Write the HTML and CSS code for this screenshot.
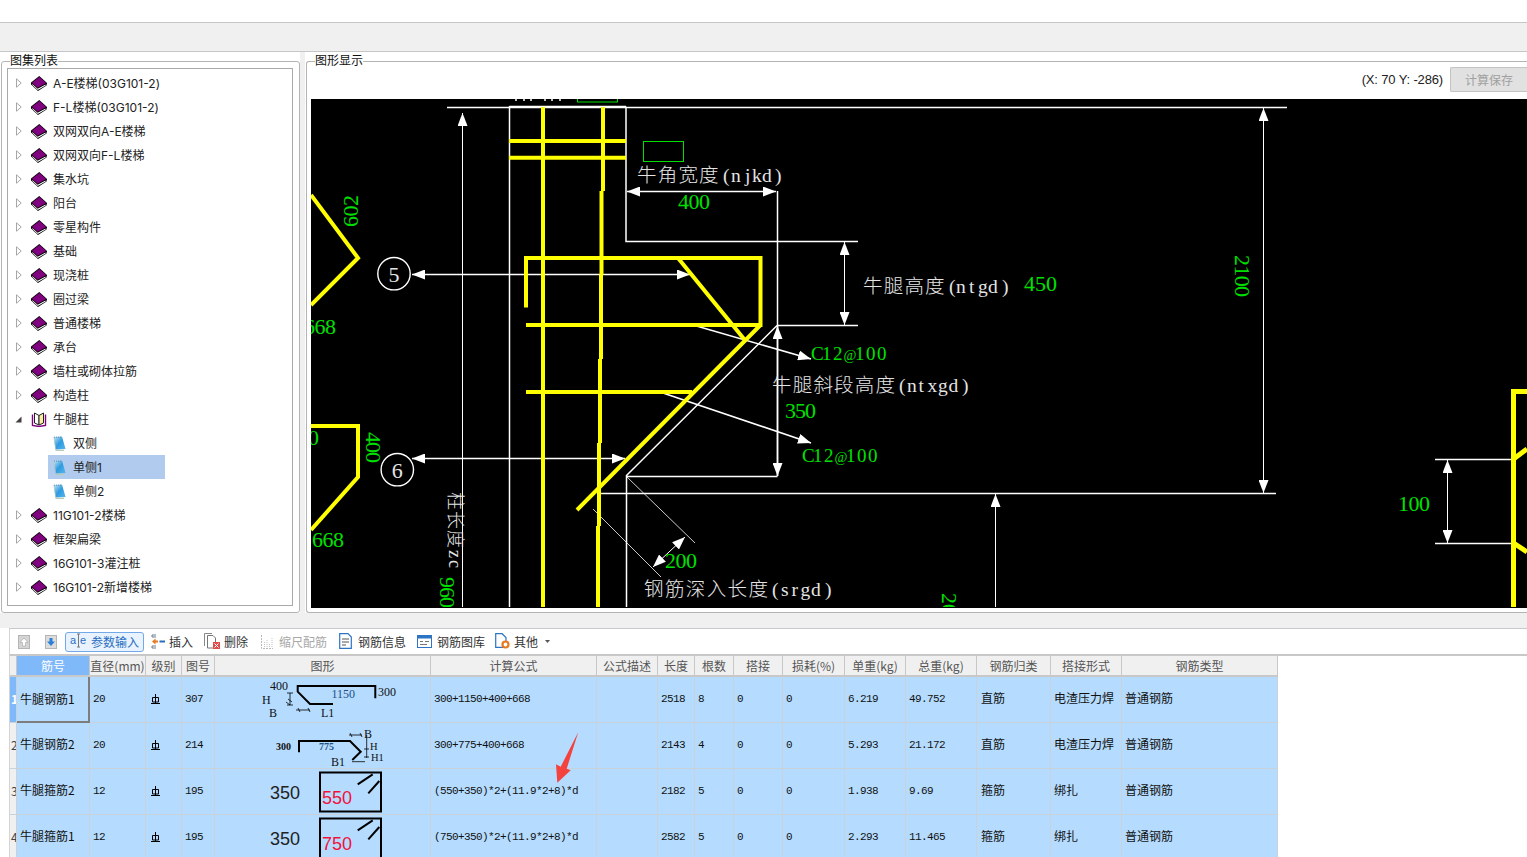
FILE: index.html
```html
<!DOCTYPE html>
<html lang="zh-CN">
<head>
<meta charset="utf-8">
<title>图集列表</title>
<link rel="stylesheet" href="styles.css">
</head>
<body>
<svg class="defs" width="0" height="0" aria-hidden="true">
  <defs>
    <linearGradient id="noteFill" x1="0" y1="0" x2="1" y2="1">
      <stop offset="0" stop-color="#cdeaf6"/><stop offset=".5" stop-color="#2f9be0"/><stop offset="1" stop-color="#57b6ea"/>
    </linearGradient>
    <marker id="ah" viewBox="0 0 13 10" refX="13" refY="5" markerWidth="13" markerHeight="10" markerUnits="userSpaceOnUse" orient="auto-start-reverse">
      <path d="M0 0L13 5L0 10z" fill="#fff"/>
    </marker>
  </defs>
  <symbol id="book" viewBox="0 0 16 15">
    <polygon points="8.3,0 16,7 15.5,9.500 7,15 0,8.500 0,6.500" fill="#000"/>
    <polygon points="8.3,1 15.2,7 6.600,11.800 1,6.800" fill="#800080"/>
    <polygon points="1.300,8 6.600,12.800 14.600,8.600 14.600,9.400 6.800,13.900 1.300,9" fill="#fff"/>
  </symbol>
  <symbol id="openbook" viewBox="0 0 15 15">
    <path d="M1 2.500V13.500L7.500 14.500L14 13.500V2.500" fill="#fff" stroke="#800080" stroke-width="1.400"/>
    <path d="M3 1L7.500 3.500V13L3 11z" fill="#fff" stroke="#222"/>
    <path d="M12 1L7.500 3.500V13L12 11z" fill="#f8efa0" stroke="#222"/>
  </symbol>
  <symbol id="note" viewBox="0 0 13 15">
    <polygon points="0.500,1 9,0.500 12.500,13 2.500,13.500" fill="url(#noteFill)"/>
    <polygon points="0.500,1 2.500,13 2.500,15 11,15 11,13.800 3.200,13.800 1.200,1" fill="#b9c9b8"/>
    <path d="M1 1.200H9" stroke="#5d8fb0" stroke-dasharray="1 1"/>
  </symbol>
  <symbol id="closed" viewBox="0 0 6 10"><path d="M.5 .8L5.200 5L.5 9.200z" fill="#fff" stroke="#a6a6a6"/></symbol>
  <symbol id="open" viewBox="0 0 7 7"><path d="M6.500 .5V6.500H.5z" fill="#404040"/></symbol>
  <symbol id="bar" viewBox="0 0 9 10">
    <path d="M4.500 0V10M0 9.500H9M1.500 3.500H7.500V8H1.500z" fill="none" stroke="#000" stroke-width="1"/>
  </symbol>
</svg>

<div class="app">
  <div class="topbar"></div>
  <div class="menubar"></div>

  <div class="panes">
    <section class="pane pane-left">
      <div class="group">
        <span class="legend">图集列表</span>
        <div class="tree">
          <div class="node"><svg class="twist"><use href="#closed"/></svg><span class="label"><svg class="ico"><use href="#book"/></svg><span class="txt">A-E楼梯(03G101-2)</span></span></div>
          <div class="node"><svg class="twist"><use href="#closed"/></svg><span class="label"><svg class="ico"><use href="#book"/></svg><span class="txt">F-L楼梯(03G101-2)</span></span></div>
          <div class="node"><svg class="twist"><use href="#closed"/></svg><span class="label"><svg class="ico"><use href="#book"/></svg><span class="txt">双网双向A-E楼梯</span></span></div>
          <div class="node"><svg class="twist"><use href="#closed"/></svg><span class="label"><svg class="ico"><use href="#book"/></svg><span class="txt">双网双向F-L楼梯</span></span></div>
          <div class="node"><svg class="twist"><use href="#closed"/></svg><span class="label"><svg class="ico"><use href="#book"/></svg><span class="txt">集水坑</span></span></div>
          <div class="node"><svg class="twist"><use href="#closed"/></svg><span class="label"><svg class="ico"><use href="#book"/></svg><span class="txt">阳台</span></span></div>
          <div class="node"><svg class="twist"><use href="#closed"/></svg><span class="label"><svg class="ico"><use href="#book"/></svg><span class="txt">零星构件</span></span></div>
          <div class="node"><svg class="twist"><use href="#closed"/></svg><span class="label"><svg class="ico"><use href="#book"/></svg><span class="txt">基础</span></span></div>
          <div class="node"><svg class="twist"><use href="#closed"/></svg><span class="label"><svg class="ico"><use href="#book"/></svg><span class="txt">现浇桩</span></span></div>
          <div class="node"><svg class="twist"><use href="#closed"/></svg><span class="label"><svg class="ico"><use href="#book"/></svg><span class="txt">圈过梁</span></span></div>
          <div class="node"><svg class="twist"><use href="#closed"/></svg><span class="label"><svg class="ico"><use href="#book"/></svg><span class="txt">普通楼梯</span></span></div>
          <div class="node"><svg class="twist"><use href="#closed"/></svg><span class="label"><svg class="ico"><use href="#book"/></svg><span class="txt">承台</span></span></div>
          <div class="node"><svg class="twist"><use href="#closed"/></svg><span class="label"><svg class="ico"><use href="#book"/></svg><span class="txt">墙柱或砌体拉筋</span></span></div>
          <div class="node"><svg class="twist"><use href="#closed"/></svg><span class="label"><svg class="ico"><use href="#book"/></svg><span class="txt">构造柱</span></span></div>
          <div class="node"><svg class="twist twist-open"><use href="#open"/></svg><span class="label"><svg class="ico"><use href="#openbook"/></svg><span class="txt">牛腿柱</span></span></div>
          <div class="node child"><span class="label"><svg class="ico-note"><use href="#note"/></svg><span class="txt">双侧</span></span></div>
          <div class="node child"><span class="label selected"><svg class="ico-note"><use href="#note"/></svg><span class="txt">单侧1</span></span></div>
          <div class="node child"><span class="label"><svg class="ico-note"><use href="#note"/></svg><span class="txt">单侧2</span></span></div>
          <div class="node"><svg class="twist"><use href="#closed"/></svg><span class="label"><svg class="ico"><use href="#book"/></svg><span class="txt">11G101-2楼梯</span></span></div>
          <div class="node"><svg class="twist"><use href="#closed"/></svg><span class="label"><svg class="ico"><use href="#book"/></svg><span class="txt">框架扁梁</span></span></div>
          <div class="node"><svg class="twist"><use href="#closed"/></svg><span class="label"><svg class="ico"><use href="#book"/></svg><span class="txt">16G101-3灌注桩</span></span></div>
          <div class="node"><svg class="twist"><use href="#closed"/></svg><span class="label"><svg class="ico"><use href="#book"/></svg><span class="txt">16G101-2新增楼梯</span></span></div>
        </div>
      </div>
    </section>

    <section class="pane pane-right">
      <div class="group group-open">
        <span class="legend">图形显示</span>
        <div class="coordbar">
          <span class="coord">(X: 70 Y: -286)</span>
          <button class="savebtn" disabled>计算保存</button>
        </div>
        <div class="canvas">
          <svg class="drawing" viewBox="311 99 1216 508" width="1216" height="508">
            <g class="wl">
              <path d="M447 107.500H1287M509.500 106.500H626M509.500 106V607M626 106.500V241.500H858M777.500 191V476M777 325.500H858M626.500 476V607M626 476.500H777.500M777 325.500L626 476M600 493.500H1276M1435 459.500H1513M1435 543.500H1513"/>
              <path d="M516 99V101M524 99V101M531 99V101M545 99V101M552 99V101M560 99V101"/>
              <path d="M627 191.500H776" marker-start="url(#ah)" marker-end="url(#ah)"/>
              <path d="M412 274.500H690" marker-start="url(#ah)" marker-end="url(#ah)"/>
              <path d="M412 458.500H625" marker-start="url(#ah)" marker-end="url(#ah)"/>
              <path d="M777.500 326V476" marker-start="url(#ah)" marker-end="url(#ah)"/>
              <path class="lead" d="M693 325L811 359" marker-end="url(#ah)"/>
              <path class="lead" d="M663 393L811 443" marker-end="url(#ah)"/>
              <circle cx="394" cy="273.700" r="16.200"/>
              <circle cx="397.300" cy="469.700" r="16.200"/>
              <path class="dim thin" d="M627 477L695 543M593 509L661 577"/>
              <path class="dim" d="M462.500 607V113" marker-end="url(#ah)"/>
              <path class="dim" d="M844.500 242V325" marker-start="url(#ah)" marker-end="url(#ah)"/>
              <path class="dim" d="M1263.500 108V493" marker-start="url(#ah)" marker-end="url(#ah)"/>
              <path class="dim" d="M995.500 607V494" marker-end="url(#ah)"/>
              <path class="dim" d="M1447.500 460V543" marker-start="url(#ah)" marker-end="url(#ah)"/>
              <path class="dim" d="M653 567L685 537" marker-start="url(#ah)" marker-end="url(#ah)"/>
            </g>
            <g class="yl">
              <path d="M543 107V607M603 107V191M601.500 191V275M601 275V359M600 359V443M599 443V526M598 526V607"/>
              <path d="M509 141H626M509 157.700H626"/>
              <path d="M526 307.500V258H760.500V325H526"/>
              <path d="M678 258L744 339M760.500 325L577 510M526 392H692"/>
              <path d="M311 195L358 258L311 305M311 426H358V477L311 530"/>
              <path class="yl-wide" d="M1527 391.500H1513.500V607M1513.500 459L1527 449M1513.500 543L1527 552"/>
            </g>
            <g class="gb">
              <rect x="643.500" y="141.500" width="40" height="20"/>
              <rect x="577.500" y="90" width="40" height="12"/>
            </g>
            <g class="cad-w">
              <text x="637 657.700 678.400 699.100 723 731 745 752 762 775" y="182">牛角宽度(njkd)</text>
              <text x="863 883.700 904.400 925.100 949 956 969 978 988 1002" y="293">牛腿高度(ntgd)</text>
              <text x="772 792.700 813.400 834.100 854.800 875.500 899 907 918.500 927.500 938 948.500 962" y="392">牛腿斜段高度(ntxgd)</text>
              <text x="644 664.900 685.800 706.700 727.600 748.500 772 781 791.500 800.500 811 825" y="596">钢筋深入长度(srgd)</text>
              <text class="num-mark" x="394" y="281.500" text-anchor="middle">5</text>
              <text class="num-mark" x="397.300" y="477.500" text-anchor="middle">6</text>
              <text class="small" x="0 19 38 58 68" transform="translate(449 492) rotate(90)">柱长度zc</text>
            </g>
            <g class="cad-g">
              <text x="678" y="208.500" textLength="32">400</text>
              <text x="1024" y="290.500" textLength="33">450</text>
              <text x="785" y="417.500" textLength="31">350</text>
              <text x="665" y="567.500" textLength="32">200</text>
              <text x="1398" y="511" textLength="32">100</text>
              <text x="304" y="333.500" textLength="32">668</text>
              <text x="312" y="547" textLength="32">668</text>
              <text x="308" y="445">0</text>
              <text class="c12" x="811 822 833" y="360">C12<tspan class="at" x="843.500">@</tspan><tspan x="855 866 877">100</tspan></text>
              <text class="c12" x="802 813 824" y="462">C12<tspan class="at" x="834.500">@</tspan><tspan x="846 857 868">100</tspan></text>
              <text transform="translate(358 211) rotate(-90)" text-anchor="middle" textLength="32">602</text>
              <text transform="translate(366 447.500) rotate(90)" text-anchor="middle" textLength="31">400</text>
              <text transform="translate(1235 276) rotate(90)" text-anchor="middle" textLength="42">2100</text>
              <text transform="translate(440 577) rotate(90)" textLength="31">960</text>
              <text transform="translate(942 593) rotate(90)">200</text>
            </g>
          </svg>
        </div>
      </div>
    </section>
  </div>

  <div class="gutter"></div>

  <section class="bottom">
    <div class="toolbar">
      <svg class="tb-up" width="12" height="14" viewBox="0 0 12 14"><rect x=".5" y=".5" width="11" height="13" fill="#d4d4d4" stroke="#b5b5b5"/><path d="M6 3L10 7.500H7.500V11H4.500V7.500H2z" fill="#fff" stroke="#a0a0a0" stroke-width=".6"/></svg>
      <svg class="tb-down" width="12" height="14" viewBox="0 0 12 14"><rect x=".5" y=".5" width="11" height="13" fill="#dcdcdc" stroke="#b5b5b5"/><path d="M6 11L10 6.500H7.500V3H4.500V6.500H2z" fill="#2c7fd6"/></svg>
      <button class="tool tool-active"><svg width="16" height="16" viewBox="0 0 16 16"><text class="ae" x="0" y="11">a</text><text class="ae" x="10" y="11">e</text><path d="M7 1H10M8.500 1V14M7 14H10" stroke="#777" fill="none"/></svg>参数输入</button>
      <button class="tool tool-insert"><svg width="14" height="15" viewBox="0 0 14 15"><path d="M5 1H1V3H5M5 12H1V14H5" fill="none" stroke="#6b7a8c"/><path d="M1 7.500L4.500 4.500V6.500H7V8.500H4.500V10.500z" fill="#e8791e"/><path d="M8.500 7.500H14" stroke="#2a6fbf" stroke-width="2"/></svg>插入</button>
      <button class="tool tool-del"><svg width="16" height="16" viewBox="0 0 16 16"><path d="M3.500 2.500H9L11.500 5V15H3.500z" fill="#fff" stroke="#777"/><path d="M.5 13V.5H8" fill="none" stroke="#888"/><rect x="9" y="9" width="7" height="7" fill="#e24b4b"/><path d="M10.500 10.500L14.500 14.500M14.500 10.500L10.500 14.500" stroke="#fff"/></svg>删除</button>
      <button class="tool tool-off" disabled><svg width="12" height="15" viewBox="0 0 12 15"><path d="M.5 1V14.500H12" fill="none" stroke="#bbb" stroke-dasharray="2 1"/><path d="M3.500 13V7M6 13V5M8.500 13V9M11 13V3" stroke="#c4c4c4" stroke-dasharray="1 1"/></svg>缩尺配筋</button>
      <button class="tool tool-info"><svg width="13" height="16" viewBox="0 0 13 16"><path d="M.7 .7H9L12.300 4V15.300H.7z" fill="#fff" stroke="#2d74c4" stroke-width="1.200"/><path d="M3 6H10M3 9H10M3 12H7" stroke="#555"/></svg>钢筋信息</button>
      <button class="tool tool-lib"><svg width="15" height="13" viewBox="0 0 15 13"><rect x=".5" y=".5" width="14" height="12" fill="#fff" stroke="#2d74c4"/><rect x="1" y="1" width="13" height="2.500" fill="#2d74c4"/><path d="M3 6.500H6M8 6.500H12M3 9.500H10" stroke="#777"/></svg>钢筋图库</button>
      <button class="tool tool-other"><svg width="15" height="16" viewBox="0 0 15 16"><path d="M.7 .7H7L11 4.500V14.300H.7z" fill="#fff" stroke="#2d74c4" stroke-width="1.200"/><circle cx="10.500" cy="11.500" r="3" fill="#fff" stroke="#e8791e" stroke-width="2.200"/></svg>其他</button>
      <svg class="caret" width="5" height="3" viewBox="0 0 5 3"><path d="M0 0H5L2.500 3z" fill="#555"/></svg>
    </div>

    <div class="grid">
      <div class="row head">
        <div class="c"></div><div class="c c-sel">筋号</div><div class="c">直径(mm)</div><div class="c">级别</div><div class="c">图号</div><div class="c">图形</div><div class="c">计算公式</div><div class="c">公式描述</div><div class="c">长度</div><div class="c">根数</div><div class="c">搭接</div><div class="c">损耗(%)</div><div class="c">单重(kg)</div><div class="c">总重(kg)</div><div class="c">钢筋归类</div><div class="c">搭接形式</div><div class="c">钢筋类型</div>
      </div>

      <div class="row body">
        <div class="c num num-sel">1</div><div class="c cur">牛腿钢筋1</div><div class="c n">20</div><div class="c"><svg class="bar"><use href="#bar"/></svg></div><div class="c n">307</div>
        <div class="c shape"><svg viewBox="215 677 216 46" width="216" height="46">
          <path class="sh" d="M375.300 698.300V686H297.700V691.700L310 704H333"/>
          <path class="dm" d="M290 693V705M287 693H293M287 705H293M296 710H310M298 708L300 712M308 708L310 712M288 699L292 702M286 702L290 705"/>
          <text class="st" x="270" y="690">400</text><text class="st st-b" x="331.500" y="698">1150</text><text class="st" x="378" y="696">300</text><text class="st" x="262" y="704">H</text><text class="st" x="269" y="717">B</text><text class="st" x="321" y="717">L1</text>
        </svg></div>
        <div class="c n">300+1150+400+668</div><div class="c"></div><div class="c n">2518</div><div class="c n">8</div><div class="c n">0</div><div class="c n">0</div><div class="c n">6.219</div><div class="c n">49.752</div><div class="c t">直筋</div><div class="c">电渣压力焊</div><div class="c">普通钢筋</div>
      </div>

      <div class="row body">
        <div class="c num">2</div><div class="c">牛腿钢筋2</div><div class="c n">20</div><div class="c"><svg class="bar"><use href="#bar"/></svg></div><div class="c n">214</div>
        <div class="c shape"><svg viewBox="215 723 216 46" width="216" height="46">
          <path class="sh" d="M299 752.300V741H350L360.700 751.700L352.300 760"/>
          <path class="dm" d="M349 735H362M366.700 735V758M364 749H369M364 757H369M352 761.700H365M350 733L352 737M360 733L362 737"/>
          <text class="st st-s" x="276" y="750">300</text><text class="st st-s st-b" x="319" y="750">775</text><text class="st" x="364" y="738">B</text><text class="st st-t" x="370" y="750">H</text><text class="st st-t" x="371" y="761">H1</text><text class="st" x="331" y="766">B1</text>
        </svg></div>
        <div class="c n">300+775+400+668</div><div class="c"></div><div class="c n">2143</div><div class="c n">4</div><div class="c n">0</div><div class="c n">0</div><div class="c n">5.293</div><div class="c n">21.172</div><div class="c t">直筋</div><div class="c">电渣压力焊</div><div class="c">普通钢筋</div>
      </div>

      <div class="row body">
        <div class="c num">3</div><div class="c">牛腿箍筋2</div><div class="c n">12</div><div class="c"><svg class="bar"><use href="#bar"/></svg></div><div class="c n">195</div>
        <div class="c shape"><svg viewBox="215 769 216 46" width="216" height="46">
          <rect class="sh" x="320" y="772.500" width="61" height="39"/>
          <path class="sh" d="M357.700 784.300L372.700 774.300M368.300 793.300L379.300 781"/>
          <text class="big" x="270" y="798.500">350</text><text class="big red" x="322" y="804">550</text>
        </svg></div>
        <div class="c n">(550+350)*2+(11.9*2+8)*d</div><div class="c"></div><div class="c n">2182</div><div class="c n">5</div><div class="c n">0</div><div class="c n">0</div><div class="c n">1.938</div><div class="c n">9.69</div><div class="c t">箍筋</div><div class="c">绑扎</div><div class="c">普通钢筋</div>
      </div>

      <div class="row body">
        <div class="c num">4</div><div class="c">牛腿箍筋1</div><div class="c n">12</div><div class="c"><svg class="bar"><use href="#bar"/></svg></div><div class="c n">195</div>
        <div class="c shape"><svg viewBox="215 815 216 46" width="216" height="46">
          <rect class="sh" x="320" y="818.500" width="61" height="60"/>
          <path class="sh" d="M357.700 830.300L372.700 820.300M368.300 839.300L379.300 827"/>
          <text class="big" x="270" y="844.500">350</text><text class="big red" x="322" y="850">750</text>
        </svg></div>
        <div class="c n">(750+350)*2+(11.9*2+8)*d</div><div class="c"></div><div class="c n">2582</div><div class="c n">5</div><div class="c n">0</div><div class="c n">0</div><div class="c n">2.293</div><div class="c n">11.465</div><div class="c t">箍筋</div><div class="c">绑扎</div><div class="c">普通钢筋</div>
      </div>
    </div>

    <svg class="redarrow" viewBox="555 730 25 53" width="25" height="53"><path d="M578.300 731L566.700 767.700L570.700 769.300L557.300 781.700L556 763.300L560.700 765.700z" fill="#f4433f"/></svg>
  </section>
</div>
</body>
</html>
```

FILE: styles.css
```css
* { box-sizing: border-box; }
html, body { margin: 0; padding: 0; background: #fff; }
body { font: 12px/1.2 "Noto Sans CJK SC", "Liberation Sans", sans-serif; color: #222; }
.defs { position: absolute; }

.app { width: 1527px; height: 857px; overflow: hidden; position: relative; display: flex; flex-direction: column; }

.topbar { height: 23px; background: #fff; border-bottom: 1px solid #c6c6c6; flex: none; }
.menubar { height: 29px; background: #f0f0f0; border-bottom: 1px solid #c6c6c6; flex: none; }

.panes { height: 561px; flex: none; display: flex; gap: 5px; background: #f0f0f0; }
.pane { background: #fff; padding-top: 9px; }
.pane-left { width: 300px; padding-left: 1px; }
.pane-right { flex: 1; padding-left: 1px; }

.group { position: relative; height: 100%; border: 1px solid #b4b4b4; border-radius: 3px; background: #fff; }
.group-open { border-right: 0; border-radius: 3px 0 0 3px; padding: 0 0 4px 4px; display: flex; flex-direction: column; }
.legend { position: absolute; left: 8px; top: -10px; font-size: 12px; line-height: 16px; color: #111; background: #fff; }

.tree { position: absolute; left: 5px; top: 6px; width: 286px; height: 538px; border: 1px solid #a9a9a9; padding-top: 2px; }
.node { height: 24px; display: flex; align-items: center; padding-left: 8px; }
.node.child { padding-left: 40px; }
.twist { width: 6px; height: 10px; margin-right: 9px; flex: none; }
.twist-open { width: 7px; height: 7px; margin-left: -1px; margin-right: 9px; }
.label { display: inline-flex; align-items: center; height: 24px; font-size: 12px; color: #222; white-space: nowrap; }
.txt { font-family: "Inter", "Noto Sans CJK SC", sans-serif; padding-top: 3px; }
.ico { width: 16px; height: 15px; margin-right: 6px; flex: none; }
.ico-note { width: 13px; height: 15px; margin-left: 5px; margin-right: 7px; flex: none; }
.label.selected { width: 117px; background: #b0cbee; }

.coordbar { height: 37px; flex: none; display: flex; align-items: flex-start; justify-content: flex-end; padding-top: 5px; gap: 7px; }
.coord { font-family: "Liberation Sans", sans-serif; font-size: 13px; letter-spacing: -.15px; line-height: 26px; color: #222; }
.savebtn { width: 77px; height: 25px; background: #e1e1e1; border: 1px solid #c4c4c4; border-right: 0; border-radius: 2px 0 0 2px; color: #a0a0a0; font: 12px "Noto Sans CJK SC", sans-serif; padding: 0; }

.canvas { flex: 1; background: #000; overflow: hidden; }
.drawing { display: block; }
.wl path, .wl circle { fill: none; stroke: #fff; stroke-width: 1.5; }
.wl circle { stroke-width: 1.4; }
.wl path.dim { stroke-width: 1; }
.wl path.thin { stroke-width: .8; }
.wl path.lead { stroke-width: 1.6; }
.yl path { fill: none; stroke: #ff0; stroke-width: 4; stroke-linejoin: miter; }
.yl path.yl-wide { stroke-width: 5; }
.gb rect { fill: none; stroke: #00e000; stroke-width: 1; }
.cad-w text { fill: #e4e4e4; font: 300 19.500px "Liberation Serif", "Noto Sans CJK SC", serif; }
.cad-w text.small { font-size: 18px; }
.cad-w text.num-mark { font-size: 22px; }
.cad-g text { fill: #00e000; font: 22px "Liberation Serif", serif; }
.cad-g text.c12 { font-size: 19px; }
.cad-g text.c12 .at { font-size: 14px; }

.gutter { height: 15px; flex: none; background: #f0f0f0; }

.bottom { flex: 1; position: relative; background: #fff; padding-left: 9px; min-height: 0; }
.toolbar { height: 28px; border-top: 1px solid #c8c8d0; border-bottom: 2px solid #c8c8c8; border-left: 1px solid #d4d4d4; display: flex; align-items: center; font-size: 12px; }
.tb-up { margin-left: 8px; flex: none; }
.tb-down { margin-left: 15px; flex: none; }
.tool { border: 0; background: none; padding: 0 0 1px; height: 20px; display: inline-flex; align-items: center; font: 12px "Noto Sans CJK SC", sans-serif; color: #333; flex: none; white-space: nowrap; }
.tool-active { margin-left: 8px; width: 79px; padding-left: 4px; gap: 5px; border: 1px solid #72a9e6; border-radius: 3px; background: #e8f3ff; color: #2a6fc0; }
.ae { font: 11px "Liberation Sans", sans-serif; fill: #2a6fc0; }
.tool-insert { margin-left: 7px; gap: 4px; }
.tool-del { margin-left: 11px; gap: 4px; }
.tool-off { margin-left: 13px; gap: 6px; color: #a8a8a8; }
.tool-info { margin-left: 12px; gap: 6px; }
.tool-lib { margin-left: 11px; gap: 5px; }
.tool-other { margin-left: 10px; gap: 4px; }
.caret { margin-left: 7px; flex: none; }

.grid { border-left: 1px solid #d4d4d4; }
.row { display: grid; width: 1268px; grid-template-columns: 7px 73px 56px 36px 33px 216px 166px 61px 37px 39px 49px 62px 61px 71px 74px 71px 156px; }
.c { border-right: 1px solid #c8d2da; border-bottom: 1px solid #c8d2da; overflow: hidden; white-space: nowrap; display: flex; align-items: center; }
.head { height: 21px; }
.head .c { background: #f0f0f0; color: #555; justify-content: center; padding-top: 1px; border-right-color: #c8c8c8; border-bottom: 2px solid #c8c8c8; }
.head .c-sel { background: #7fb9f9; color: #fff; }
.body { height: 46px; background: #b5dcff; }
.body .c { padding: 0 0 2px 3px; color: #111; }
.body .num { background: #f0f0f0; padding: 0 0 0 1px; color: #444; font-size: 12px; }
.body .num-sel { background: #7fb9f9; color: #fff; font-weight: 700; }
.body .cur { border-right: 2px solid #7d7d7d; border-bottom: 2px solid #7d7d7d; padding-bottom: 0; }
.body .n { font: 11px "Liberation Mono", monospace; letter-spacing: -.6px; }
.body .t { padding-left: 4px; }
.body .shape { padding: 0; display: block; }
.shape svg { display: block; }
.bar { width: 9px; height: 10px; margin-left: 2px; }
.sh { fill: none; stroke: #000; stroke-width: 2; }
.dm { fill: none; stroke: #000; stroke-width: .8; }
.st { font: 12px "Liberation Serif", serif; fill: #111; }
.st.st-t { font-size: 10.5px; }
.st-s { font-size: 10px; font-weight: 700; }
.st-b { fill: #1f4f86; }
.big { font: 18px "Liberation Sans", sans-serif; fill: #222; }
.big.red { fill: #f0123c; }

.redarrow { position: absolute; left: 555px; top: 103px; }
```
